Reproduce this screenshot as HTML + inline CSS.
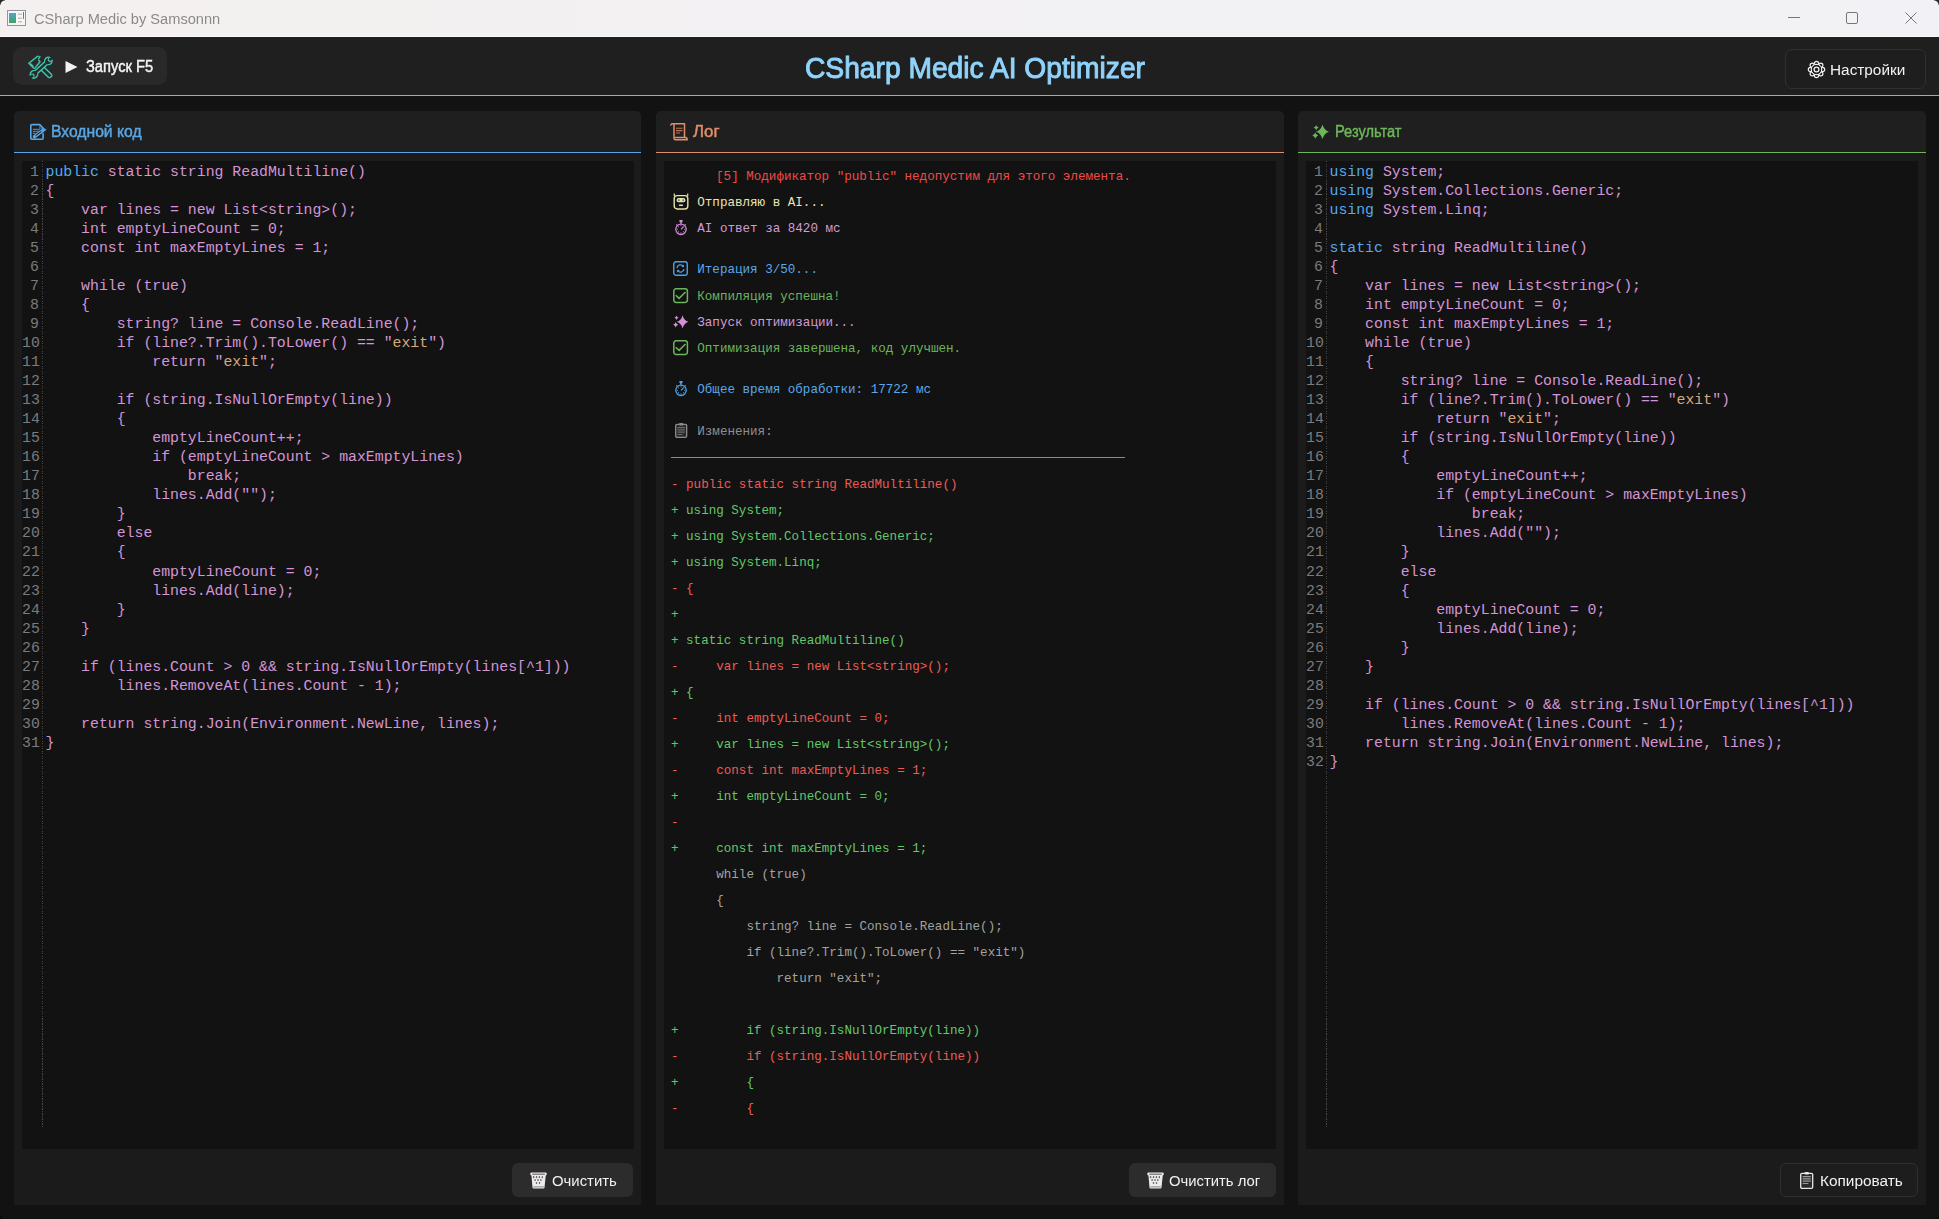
<!DOCTYPE html>
<html><head><meta charset="utf-8"><title>CSharp Medic</title>
<style>
*{margin:0;padding:0;box-sizing:border-box}
html,body{width:1939px;height:1219px;overflow:hidden;background:#121212}
body{position:relative;font-family:"Liberation Sans", sans-serif}
.a{position:absolute}
.t{position:absolute;white-space:pre;line-height:1}
pre{position:absolute;font-family:"Liberation Mono", monospace;white-space:pre;margin:0}
svg{position:absolute;overflow:visible}
.k{color:#56a9ec}.s{color:#d8a77c}
</style></head><body>

<div class="a" style="left:0;top:0;width:1939px;height:37px;background:linear-gradient(90deg,#f4f0ef,#f2f1f4 60%,#f2f1f5)"></div>
<div class="a" style="left:0;top:36px;width:1939px;height:1px;background:#fbfbfb"></div>
<div class="a" style="left:0;top:0;width:5px;height:5px;background:radial-gradient(circle at 100% 100%, transparent 4px, #2a2a2a 5px)"></div>
<div class="a" style="left:1934px;top:0;width:5px;height:5px;background:radial-gradient(circle at 0% 100%, transparent 4px, #2a2a2a 5px)"></div>
<svg style="left:7px;top:10px" width="19" height="16" viewBox="0 0 19 16">
<defs><linearGradient id="gA" x1="0" y1="0" x2="0" y2="1"><stop offset="0" stop-color="#5a9fd0"/><stop offset="1" stop-color="#38a860"/></linearGradient></defs>
<rect x="0.5" y="0.5" width="18" height="15" fill="#f6f6f6" stroke="#8f969c"/>
<rect x="2" y="3" width="7" height="10" fill="url(#gA)"/>
<rect x="11" y="3.5" width="4" height="1.5" fill="#c4c4c4"/><rect x="11" y="7.5" width="4" height="1.5" fill="#c4c4c4"/><rect x="11" y="11" width="4" height="1.5" fill="#c4c4c4"/>
<rect x="16" y="2" width="1" height="4" fill="#2f7fe0"/><rect x="16" y="6" width="1" height="3" fill="#2fb040"/>
</svg>
<div class="t" style="left:33.67px;top:11.00px;font-size:15.5px;font-family:'Liberation Sans', sans-serif;color:#8b8b8b;transform:scaleX(0.9441);transform-origin:0 0">CSharp Medic by Samsonnn</div>
<div class="a" style="left:1788px;top:17px;width:12px;height:1px;background:#767676"></div>
<div class="a" style="left:1846px;top:12px;width:12px;height:12px;border:1px solid #767676;border-radius:2px"></div>
<svg style="left:1905px;top:12px" width="12" height="12"><path d="M0.5 0.5L11.5 11.5M11.5 0.5L0.5 11.5" stroke="#767676" stroke-width="1"/></svg>
<div class="a" style="left:0;top:37px;width:1939px;height:58px;background:#1f1f1f"></div>
<div class="a" style="left:0;top:95px;width:1939px;height:1px;background:#c48eea"></div>
<div class="a" style="left:13px;top:47px;width:154px;height:38px;background:#292929;border-radius:9px"></div>
<svg style="left:65px;top:61px" width="13" height="12"><path d="M0.5 0 L12.5 6 L0.5 12 Z" fill="#f2f2f2"/></svg>
<div class="t" style="left:86.49px;top:59.00px;font-size:16px;font-family:'Liberation Sans', sans-serif;color:#f5f5f5;transform:scaleX(0.9177);transform-origin:0 0;-webkit-text-stroke:0.45px #f5f5f5">Запуск F5</div>
<div class="t" style="left:804.59px;top:53.00px;font-size:30px;font-family:'Liberation Sans', sans-serif;color:#8fd3fb;transform:scaleX(0.9397);transform-origin:0 0;-webkit-text-stroke:1px #8fd3fb">CSharp Medic AI Optimizer</div>
<div class="a" style="left:1785px;top:49px;width:141px;height:40px;border:1px solid #303030;border-radius:7px;background:#1e1e1e"></div>
<div class="t" style="left:1829.77px;top:62.00px;font-size:15.5px;font-family:'Liberation Sans', sans-serif;color:#f2f2f2;transform:scaleX(0.9905);transform-origin:0 0">Настройки</div>
<div class="a" style="left:14px;top:111px;width:627px;height:1094px;background:#1b1b1b;border-radius:5px 5px 0 0"></div>
<div class="a" style="left:14px;top:111px;width:627px;height:41px;background:#1f1f1f;border-radius:5px 5px 0 0"></div>
<div class="a" style="left:14px;top:152px;width:627px;height:1px;background:#5aa6e4"></div>
<div class="a" style="left:22px;top:161px;width:612px;height:988px;background:#121212"></div>
<div class="t" style="left:50.75px;top:124.00px;font-size:16px;font-family:'Liberation Sans', sans-serif;color:#5aa6e4;transform:scaleX(0.9802);transform-origin:0 0;-webkit-text-stroke:0.45px #5aa6e4">Входной код</div>
<div class="a" style="left:656px;top:111px;width:628px;height:1094px;background:#1b1b1b;border-radius:5px 5px 0 0"></div>
<div class="a" style="left:656px;top:111px;width:628px;height:41px;background:#1f1f1f;border-radius:5px 5px 0 0"></div>
<div class="a" style="left:656px;top:152px;width:628px;height:1px;background:#df8f6a"></div>
<div class="a" style="left:664px;top:161px;width:612px;height:988px;background:#121212"></div>
<div class="t" style="left:692.83px;top:124.00px;font-size:16px;font-family:'Liberation Sans', sans-serif;color:#df8f6a;transform:scaleX(1.0505);transform-origin:0 0;-webkit-text-stroke:0.45px #df8f6a">Лог</div>
<div class="a" style="left:1298px;top:111px;width:628px;height:1094px;background:#1b1b1b;border-radius:5px 5px 0 0"></div>
<div class="a" style="left:1298px;top:111px;width:628px;height:41px;background:#1f1f1f;border-radius:5px 5px 0 0"></div>
<div class="a" style="left:1298px;top:152px;width:628px;height:1px;background:#6db65a"></div>
<div class="a" style="left:1306px;top:161px;width:612px;height:988px;background:#121212"></div>
<div class="t" style="left:1334.83px;top:124.00px;font-size:16px;font-family:'Liberation Sans', sans-serif;color:#6db65a;transform:scaleX(0.9129);transform-origin:0 0;-webkit-text-stroke:0.45px #6db65a">Результат</div>
<pre style="left:22px;top:162.53px;width:17.00px;text-align:right;font-size:14.83px;line-height:19.04px;color:#7b7b7b">1
2
3
4
5
6
7
8
9
10
11
12
13
14
15
16
17
18
19
20
21
22
23
24
25
26
27
28
29
30
31</pre>
<div class="a" style="left:42.0px;top:161px;width:1px;height:967px;background:repeating-linear-gradient(180deg,#464646 0 1px,transparent 1px 2.5px)"></div>
<pre style="left:45.50px;top:162.53px;font-size:14.83px;line-height:19.04px;color:#d495d6"><span class="k">public</span> static string ReadMultiline()
{
    var lines = new List&lt;string&gt;();
    int emptyLineCount = 0;
    const int maxEmptyLines = 1;

    while (true)
    {
        string? line = Console.ReadLine();
        if (line?.Trim().ToLower() == "<span class="s">exit</span>")
            return "<span class="s">exit</span>";

        if (string.IsNullOrEmpty(line))
        {
            emptyLineCount++;
            if (emptyLineCount &gt; maxEmptyLines)
                break;
            lines.Add("");
        }
        else
        {
            emptyLineCount = 0;
            lines.Add(line);
        }
    }

    if (lines.Count &gt; 0 &amp;&amp; string.IsNullOrEmpty(lines[^1]))
        lines.RemoveAt(lines.Count - 1);

    return string.Join(Environment.NewLine, lines);
}</pre>
<pre style="left:1306px;top:162.53px;width:17.00px;text-align:right;font-size:14.83px;line-height:19.04px;color:#7b7b7b">1
2
3
4
5
6
7
8
9
10
11
12
13
14
15
16
17
18
19
20
21
22
23
24
25
26
27
28
29
30
31
32</pre>
<div class="a" style="left:1326.0px;top:161px;width:1px;height:967px;background:repeating-linear-gradient(180deg,#464646 0 1px,transparent 1px 2.5px)"></div>
<pre style="left:1329.50px;top:162.53px;font-size:14.83px;line-height:19.04px;color:#d495d6"><span class="k">using</span> System;
<span class="k">using</span> System.Collections.Generic;
<span class="k">using</span> System.Linq;

<span class="k">static</span> string ReadMultiline()
{
    var lines = new List&lt;string&gt;();
    int emptyLineCount = 0;
    const int maxEmptyLines = 1;
    while (true)
    {
        string? line = Console.ReadLine();
        if (line?.Trim().ToLower() == "<span class="s">exit</span>")
            return "<span class="s">exit</span>";
        if (string.IsNullOrEmpty(line))
        {
            emptyLineCount++;
            if (emptyLineCount &gt; maxEmptyLines)
                break;
            lines.Add("");
        }
        else
        {
            emptyLineCount = 0;
            lines.Add(line);
        }
    }

    if (lines.Count &gt; 0 &amp;&amp; string.IsNullOrEmpty(lines[^1]))
        lines.RemoveAt(lines.Count - 1);
    return string.Join(Environment.NewLine, lines);
}</pre>
<div class="t" style="left:716.09px;top:171.00px;font-size:12.57px;font-family:&quot;Liberation Mono&quot;,monospace;color:#f04a48">[5] Модификатор "public" недопустим для этого элемента.</div>
<div class="t" style="left:697.30px;top:197.00px;font-size:12.57px;font-family:&quot;Liberation Mono&quot;,monospace;color:#ece4b0">Отправляю в AI...</div>
<div class="t" style="left:697.30px;top:223.00px;font-size:12.57px;font-family:&quot;Liberation Mono&quot;,monospace;color:#d49bd6">AI ответ за 8420 мс</div>
<div class="t" style="left:697.30px;top:264.00px;font-size:12.57px;font-family:&quot;Liberation Mono&quot;,monospace;color:#5aa8ea">Итерация 3/50...</div>
<div class="t" style="left:697.30px;top:291.00px;font-size:12.57px;font-family:&quot;Liberation Mono&quot;,monospace;color:#6cb55c">Компиляция успешна!</div>
<div class="t" style="left:697.30px;top:317.00px;font-size:12.57px;font-family:&quot;Liberation Mono&quot;,monospace;color:#d49bd6">Запуск оптимизации...</div>
<div class="t" style="left:697.30px;top:343.00px;font-size:12.57px;font-family:&quot;Liberation Mono&quot;,monospace;color:#6cb55c">Оптимизация завершена, код улучшен.</div>
<div class="t" style="left:697.30px;top:384.00px;font-size:12.57px;font-family:&quot;Liberation Mono&quot;,monospace;color:#5aa8ea">Общее время обработки: 17722 мс</div>
<div class="t" style="left:697.30px;top:426.00px;font-size:12.57px;font-family:&quot;Liberation Mono&quot;,monospace;color:#8f8f8f">Изменения:</div>
<div class="a" style="left:671px;top:457px;width:454px;height:1px;background:#8a8a8a"></div>
<div class="t" style="left:671.00px;top:479.00px;font-size:12.57px;font-family:&quot;Liberation Mono&quot;,monospace;color:#ee5b55">- public static string ReadMultiline()</div>
<div class="t" style="left:671.00px;top:505.00px;font-size:12.57px;font-family:&quot;Liberation Mono&quot;,monospace;color:#62c86a">+ using System;</div>
<div class="t" style="left:671.00px;top:531.00px;font-size:12.57px;font-family:&quot;Liberation Mono&quot;,monospace;color:#62c86a">+ using System.Collections.Generic;</div>
<div class="t" style="left:671.00px;top:557.00px;font-size:12.57px;font-family:&quot;Liberation Mono&quot;,monospace;color:#62c86a">+ using System.Linq;</div>
<div class="t" style="left:671.00px;top:583.00px;font-size:12.57px;font-family:&quot;Liberation Mono&quot;,monospace;color:#ee5b55">- {</div>
<div class="t" style="left:671.00px;top:609.00px;font-size:12.57px;font-family:&quot;Liberation Mono&quot;,monospace;color:#62c86a">+ </div>
<div class="t" style="left:671.00px;top:635.00px;font-size:12.57px;font-family:&quot;Liberation Mono&quot;,monospace;color:#62c86a">+ static string ReadMultiline()</div>
<div class="t" style="left:671.00px;top:661.00px;font-size:12.57px;font-family:&quot;Liberation Mono&quot;,monospace;color:#ee5b55">-     var lines = new List&lt;string&gt;();</div>
<div class="t" style="left:671.00px;top:687.00px;font-size:12.57px;font-family:&quot;Liberation Mono&quot;,monospace;color:#62c86a">+ {</div>
<div class="t" style="left:671.00px;top:713.00px;font-size:12.57px;font-family:&quot;Liberation Mono&quot;,monospace;color:#ee5b55">-     int emptyLineCount = 0;</div>
<div class="t" style="left:671.00px;top:739.00px;font-size:12.57px;font-family:&quot;Liberation Mono&quot;,monospace;color:#62c86a">+     var lines = new List&lt;string&gt;();</div>
<div class="t" style="left:671.00px;top:765.00px;font-size:12.57px;font-family:&quot;Liberation Mono&quot;,monospace;color:#ee5b55">-     const int maxEmptyLines = 1;</div>
<div class="t" style="left:671.00px;top:791.00px;font-size:12.57px;font-family:&quot;Liberation Mono&quot;,monospace;color:#62c86a">+     int emptyLineCount = 0;</div>
<div class="t" style="left:671.00px;top:817.00px;font-size:12.57px;font-family:&quot;Liberation Mono&quot;,monospace;color:#ee5b55">- </div>
<div class="t" style="left:671.00px;top:843.00px;font-size:12.57px;font-family:&quot;Liberation Mono&quot;,monospace;color:#62c86a">+     const int maxEmptyLines = 1;</div>
<div class="t" style="left:671.00px;top:869.00px;font-size:12.57px;font-family:&quot;Liberation Mono&quot;,monospace;color:#a3a3a3">      while (true)</div>
<div class="t" style="left:671.00px;top:895.00px;font-size:12.57px;font-family:&quot;Liberation Mono&quot;,monospace;color:#a3a3a3">      {</div>
<div class="t" style="left:671.00px;top:921.00px;font-size:12.57px;font-family:&quot;Liberation Mono&quot;,monospace;color:#a3a3a3">          string? line = Console.ReadLine();</div>
<div class="t" style="left:671.00px;top:947.00px;font-size:12.57px;font-family:&quot;Liberation Mono&quot;,monospace;color:#a3a3a3">          if (line?.Trim().ToLower() == "exit")</div>
<div class="t" style="left:671.00px;top:973.00px;font-size:12.57px;font-family:&quot;Liberation Mono&quot;,monospace;color:#a3a3a3">              return "exit";</div>
<div class="t" style="left:671.00px;top:1025.00px;font-size:12.57px;font-family:&quot;Liberation Mono&quot;,monospace;color:#62c86a">+         if (string.IsNullOrEmpty(line))</div>
<div class="t" style="left:671.00px;top:1051.00px;font-size:12.57px;font-family:&quot;Liberation Mono&quot;,monospace;color:#ee5b55">-         if (string.IsNullOrEmpty(line))</div>
<div class="t" style="left:671.00px;top:1077.00px;font-size:12.57px;font-family:&quot;Liberation Mono&quot;,monospace;color:#62c86a">+         {</div>
<div class="t" style="left:671.00px;top:1103.00px;font-size:12.57px;font-family:&quot;Liberation Mono&quot;,monospace;color:#ee5b55">-         {</div>
<svg style="left:29px;top:123px" width="18" height="18" viewBox="0 0 18 18" ><g fill="none" stroke="#5aa6e4" stroke-width="1.6" stroke-linejoin="round" stroke-linecap="round">
<path d="M1.8 15.2 V2.6 Q1.8 1.6 2.8 1.6 H10.8 L14.2 5.4"/>
<path d="M14.1 10.6 V15.2 Q14.1 16.2 13.1 16.2 H2.8 Q1.8 16.2 1.8 15.2"/>
</g>
<path d="M10.8 1.8 V5.2 H14" fill="none" stroke="#3a7fc0" stroke-width="1.1"/>
<path d="M3.8 6.4 H11 M3.8 8.4 H10.4 M3.8 10.4 H6.6" stroke="#3f7db8" stroke-width="1.1"/>
<path d="M4.6 14.4 L15.6 6.2" stroke="#5aa6e4" stroke-width="3.4" stroke-linecap="butt"/>
<path d="M16.7 7.6 L13.8 4.6 L17.5 6.4 Z" fill="#5aa6e4"/>
<path d="M6.6 12.6 L12.3 8.4" stroke="#121212" stroke-width="1"/>
<path d="M3.6 15.4 L4.6 12.6 L6 14.4 Z" fill="#5aa6e4"/></svg>
<svg style="left:670px;top:123px" width="19" height="18" viewBox="0 0 19 18" ><g fill="none" stroke="#df8f6a" stroke-width="1.5" stroke-linejoin="round" stroke-linecap="round">
<path d="M0.8 2 Q1 0.8 2.5 0.8 L14.5 0.8 L14.5 14.5"/>
<path d="M4 1 L4 15.3 Q4 16.8 5.5 16.8 L17.2 16.8 Q17.5 15.2 16 14.5 L5.5 14.5"/>
</g>
<path d="M6 5.2 H12.5 M6 7.6 H12.5 M6 10 H10" stroke="#b87a5c" stroke-width="1.1"/></svg>
<svg style="left:1312px;top:124px" width="18" height="16" viewBox="0 0 18 16" ><path fill="#6db65a" d="M10.5 0.5 Q11.93 6.194 17.0 7.8 Q11.93 9.405999999999999 10.5 15.1 Q9.07 9.405999999999999 4.0 7.8 Q9.07 6.194 10.5 0.5 Z M4.2 1.0 Q4.772 3.028 6.800000000000001 3.6 Q4.772 4.172000000000001 4.2 6.2 Q3.628 4.172000000000001 1.6 3.6 Q3.628 3.028 4.2 1.0 Z M3.3 8.3 Q3.9379999999999997 10.796 6.199999999999999 11.5 Q3.9379999999999997 12.204 3.3 14.7 Q2.662 12.204 0.3999999999999999 11.5 Q2.662 10.796 3.3 8.3 Z"/></svg>
<svg style="left:26px;top:54px" width="28" height="26" viewBox="0 0 28 26" ><defs><filter id="er" x="-20%" y="-20%" width="140%" height="140%"><feMorphology in="SourceAlpha" operator="erode" radius="1.45"/><feFlood flood-color="#292929"/><feComposite in2="SourceAlpha" operator="in"/></filter>
<filter id="er2" x="-20%" y="-20%" width="140%" height="140%"><feMorphology in="SourceAlpha" operator="erode" radius="1.45" result="e"/><feFlood flood-color="#292929"/><feComposite in2="e" operator="in"/></filter></defs>
<g id="hm"><path d="M2.1 9.3 L11.2 2.0 L14.4 2.4 L12.8 5.4 L14.6 7.8 L9.0 14.8 L7.0 14.2 Z" fill="#3ccbb0" stroke="#3ccbb0" stroke-width="0.6" stroke-linejoin="round"/>
<path d="M16.2 14.2 L23.6 21.4" stroke="#3ccbb0" stroke-width="5.6" stroke-linecap="round"/></g>
<g filter="url(#er2)"><path d="M2.1 9.3 L11.2 2.0 L14.4 2.4 L12.8 5.4 L14.6 7.8 L9.0 14.8 L7.0 14.2 Z" fill="#000" stroke="#000" stroke-width="0.6" stroke-linejoin="round"/>
<path d="M16.2 14.2 L23.6 21.4" stroke="#000" stroke-width="5.6" stroke-linecap="round"/></g>
<path d="M4.3 9.5 L7.4 12.5" stroke="#3ccbb0" stroke-width="1.3"/>
<g><path d="M26.48 5.24 A4.4 4.4 0 1 1 24.74 3.17 L22.45 5.09 L24.19 7.16 Z M3.82 22.06 A4.4 4.4 0 1 1 5.56 24.13 L7.85 22.21 L6.11 20.14 Z" fill="#3ccbb0"/><path d="M9.6 18.6 L20.6 8.6" stroke="#3ccbb0" stroke-width="5.2"/></g>
<g filter="url(#er2)"><path d="M26.48 5.24 A4.4 4.4 0 1 1 24.74 3.17 L22.45 5.09 L24.19 7.16 Z M3.82 22.06 A4.4 4.4 0 1 1 5.56 24.13 L7.85 22.21 L6.11 20.14 Z" fill="#000"/><path d="M9.6 18.6 L20.6 8.6" stroke="#000" stroke-width="5.2"/></g></svg>
<svg style="left:1808px;top:61px" width="17" height="17" viewBox="0 0 17 17" ><g fill="#1e1e1e" stroke="#f0f0f0" stroke-width="1.2"><circle cx="8.50" cy="2.40" r="2.1"/><circle cx="12.81" cy="4.19" r="2.1"/><circle cx="14.60" cy="8.50" r="2.1"/><circle cx="12.81" cy="12.81" r="2.1"/><circle cx="8.50" cy="14.60" r="2.1"/><circle cx="4.19" cy="12.81" r="2.1"/><circle cx="2.40" cy="8.50" r="2.1"/><circle cx="4.19" cy="4.19" r="2.1"/><circle cx="8.5" cy="8.5" r="5.2"/></g>
<circle cx="8.5" cy="8.5" r="4.6" fill="#1e1e1e"/><circle cx="8.5" cy="8.5" r="2.4" fill="none" stroke="#f0f0f0" stroke-width="1.3"/></svg>
<svg style="left:673px;top:193px" width="16" height="17" viewBox="0 0 16 17" ><g fill="none" stroke="#e9e3a8" stroke-width="1.4" stroke-linejoin="round">
<rect x="1.2" y="2.6" width="13.6" height="13.4" rx="3"/>
</g>
<path d="M1.3 0.5 V3 M14.7 0.5 V3" stroke="#e9e3a8" stroke-width="1.2"/>
<rect x="3.6" y="5" width="8.8" height="4.2" rx="2" fill="#e9e3a8"/>
<circle cx="5.9" cy="7.1" r="0.9" fill="#1a6a70"/><circle cx="10.1" cy="7.1" r="0.9" fill="#1a6a70"/>
<rect x="5.8" y="11.4" width="4.4" height="1.6" rx="0.8" fill="#e9e3a8"/></svg>
<svg style="left:674.7px;top:220px" width="12" height="15" viewBox="0 0 12 15" ><rect x="4.4" y="0" width="3.2" height="2" rx="0.6" fill="#d48ad8"/><rect x="5.2" y="1.5" width="1.6" height="2.2" fill="#d48ad8"/>
<circle cx="6" cy="9.3" r="5.2" fill="none" stroke="#d48ad8" stroke-width="1.3"/>
<path d="M1.3 4.4 L2.6 5.6 M10.7 4.4 L9.4 5.6" stroke="#d48ad8" stroke-width="1.2"/>
<circle cx="9.60" cy="9.30" r="0.55" fill="#d48ad8"/><circle cx="8.55" cy="11.85" r="0.55" fill="#d48ad8"/><circle cx="6.00" cy="12.90" r="0.55" fill="#d48ad8"/><circle cx="3.45" cy="11.85" r="0.55" fill="#d48ad8"/><circle cx="2.40" cy="9.30" r="0.55" fill="#d48ad8"/><circle cx="3.45" cy="6.75" r="0.55" fill="#d48ad8"/><circle cx="6.00" cy="5.70" r="0.55" fill="#d48ad8"/><circle cx="8.55" cy="6.75" r="0.55" fill="#d48ad8"/><path d="M6 9.3 L8.3 7" stroke="#d48ad8" stroke-width="1.1"/></svg>
<svg style="left:674.7px;top:380.5px" width="12" height="15" viewBox="0 0 12 15" ><rect x="4.4" y="0" width="3.2" height="2" rx="0.6" fill="#4fa3ec"/><rect x="5.2" y="1.5" width="1.6" height="2.2" fill="#4fa3ec"/>
<circle cx="6" cy="9.3" r="5.2" fill="none" stroke="#4fa3ec" stroke-width="1.3"/>
<path d="M1.3 4.4 L2.6 5.6 M10.7 4.4 L9.4 5.6" stroke="#4fa3ec" stroke-width="1.2"/>
<circle cx="9.60" cy="9.30" r="0.55" fill="#4fa3ec"/><circle cx="8.55" cy="11.85" r="0.55" fill="#4fa3ec"/><circle cx="6.00" cy="12.90" r="0.55" fill="#4fa3ec"/><circle cx="3.45" cy="11.85" r="0.55" fill="#4fa3ec"/><circle cx="2.40" cy="9.30" r="0.55" fill="#4fa3ec"/><circle cx="3.45" cy="6.75" r="0.55" fill="#4fa3ec"/><circle cx="6.00" cy="5.70" r="0.55" fill="#4fa3ec"/><circle cx="8.55" cy="6.75" r="0.55" fill="#4fa3ec"/><path d="M6 9.3 L8.3 7" stroke="#4fa3ec" stroke-width="1.1"/></svg>
<svg style="left:673px;top:261px" width="15" height="15" viewBox="0 0 15 15" ><rect x="0.75" y="0.75" width="13.5" height="13.5" rx="2.2" fill="none" stroke="#4f9fe8" stroke-width="1.4"/>
<g fill="none" stroke="#4f9fe8" stroke-width="1.3"><path d="M4 7 A3.5 3.5 0 0 1 10.3 5.3"/><path d="M11 8 A3.5 3.5 0 0 1 4.7 9.7"/></g>
<path d="M10.8 3.5 L11 6.3 L8.3 6" fill="#4f9fe8"/><path d="M4.2 11.5 L4 8.7 L6.7 9" fill="#4f9fe8"/></svg>
<svg style="left:673px;top:287.6px" width="15" height="15" viewBox="0 0 15 15" ><rect x="0.8" y="0.8" width="13.6" height="13.6" rx="2.3" fill="none" stroke="#6cb55c" stroke-width="1.5"/>
<path d="M2.7 7.2 L6.1 10.4 L12.5 4" fill="none" stroke="#6cb55c" stroke-width="1.5"/></svg>
<svg style="left:673px;top:339.6px" width="15" height="15" viewBox="0 0 15 15" ><rect x="0.8" y="0.8" width="13.6" height="13.6" rx="2.3" fill="none" stroke="#6cb55c" stroke-width="1.5"/>
<path d="M2.7 7.2 L6.1 10.4 L12.5 4" fill="none" stroke="#6cb55c" stroke-width="1.5"/></svg>
<svg style="left:673px;top:314.5px" width="16" height="14" viewBox="0 0 16 14" ><path fill="#d68fd6" d="M9.6 0.20000000000000018 Q10.876 5.348 15.399999999999999 6.8 Q10.876 8.251999999999999 9.6 13.399999999999999 Q8.324 8.251999999999999 3.8 6.8 Q8.324 5.348 9.6 0.20000000000000018 Z M3.5 0.5999999999999996 Q3.984 2.316 5.7 2.8 Q3.984 3.284 3.5 5.0 Q3.016 3.284 1.2999999999999998 2.8 Q3.016 2.316 3.5 0.5999999999999996 Z M2.7 7.000000000000001 Q3.2720000000000002 9.184000000000001 5.300000000000001 9.8 Q3.2720000000000002 10.416 2.7 12.600000000000001 Q2.128 10.416 0.10000000000000009 9.8 Q2.128 9.184000000000001 2.7 7.000000000000001 Z"/></svg>
<svg style="left:674.5px;top:423px" width="12.4" height="15" viewBox="0 0 12.4 15" ><rect x="0.7" y="1.3" width="11.0" height="13" rx="1.2" fill="#2a2a2a" stroke="#8c8c8c" stroke-width="1.3"/>
<rect x="4.0" y="0" width="4.4" height="2.4" rx="1" fill="#8c8c8c"/>
<path d="M2.6 4.6 H9.8 M2.6 6.9 H9.8 M2.6 9.2 H9.8 M2.6 11.5 H7.4" stroke="#6a6a6a" stroke-width="1.2"/></svg>
<div class="a" style="left:512px;top:1163px;width:121px;height:34px;background:#2c2c2c;border-radius:6px"></div>
<svg style="left:530px;top:1172px" width="17" height="17" viewBox="0 0 17 17" ><path d="M1.4 3 L2.5 15.6 Q2.6 16.5 3.5 16.5 L13.5 16.5 Q14.4 16.5 14.5 15.6 L15.8 3 Z" fill="#ececec"/>
<ellipse cx="3.6" cy="5.2" rx="0.75" ry="1.1" fill="#6a5a6a"/><ellipse cx="6.5" cy="5.2" rx="0.75" ry="1.1" fill="#6a5a6a"/><ellipse cx="9.4" cy="5.2" rx="0.75" ry="1.1" fill="#6a5a6a"/><ellipse cx="12.3" cy="5.2" rx="0.75" ry="1.1" fill="#6a5a6a"/><ellipse cx="5.1" cy="8.1" rx="0.75" ry="1.1" fill="#6a5a6a"/><ellipse cx="8" cy="8.1" rx="0.75" ry="1.1" fill="#6a5a6a"/><ellipse cx="10.9" cy="8.1" rx="0.75" ry="1.1" fill="#6a5a6a"/><ellipse cx="6.5" cy="11" rx="0.75" ry="1.1" fill="#6a5a6a"/><ellipse cx="9.5" cy="11" rx="0.75" ry="1.1" fill="#6a5a6a"/><rect x="3.2" y="14.1" width="10.6" height="1.5" fill="#a8a8a8"/>
<rect x="0.2" y="0.6" width="16.6" height="2.8" rx="1.4" fill="#ececec"/>
<rect x="2" y="1.7" width="13" height="0.9" rx="0.45" fill="#222"/></svg>
<div class="t" style="left:552.33px;top:1173.00px;font-size:15.5px;font-family:'Liberation Sans', sans-serif;color:#f2f2f2;transform:scaleX(0.9606);transform-origin:0 0">Очистить</div>
<div class="a" style="left:1129px;top:1163px;width:147px;height:34px;background:#2c2c2c;border-radius:6px"></div>
<svg style="left:1147px;top:1172px" width="17" height="17" viewBox="0 0 17 17" ><path d="M1.4 3 L2.5 15.6 Q2.6 16.5 3.5 16.5 L13.5 16.5 Q14.4 16.5 14.5 15.6 L15.8 3 Z" fill="#ececec"/>
<ellipse cx="3.6" cy="5.2" rx="0.75" ry="1.1" fill="#6a5a6a"/><ellipse cx="6.5" cy="5.2" rx="0.75" ry="1.1" fill="#6a5a6a"/><ellipse cx="9.4" cy="5.2" rx="0.75" ry="1.1" fill="#6a5a6a"/><ellipse cx="12.3" cy="5.2" rx="0.75" ry="1.1" fill="#6a5a6a"/><ellipse cx="5.1" cy="8.1" rx="0.75" ry="1.1" fill="#6a5a6a"/><ellipse cx="8" cy="8.1" rx="0.75" ry="1.1" fill="#6a5a6a"/><ellipse cx="10.9" cy="8.1" rx="0.75" ry="1.1" fill="#6a5a6a"/><ellipse cx="6.5" cy="11" rx="0.75" ry="1.1" fill="#6a5a6a"/><ellipse cx="9.5" cy="11" rx="0.75" ry="1.1" fill="#6a5a6a"/><rect x="3.2" y="14.1" width="10.6" height="1.5" fill="#a8a8a8"/>
<rect x="0.2" y="0.6" width="16.6" height="2.8" rx="1.4" fill="#ececec"/>
<rect x="2" y="1.7" width="13" height="0.9" rx="0.45" fill="#222"/></svg>
<div class="t" style="left:1169.33px;top:1173.00px;font-size:15.5px;font-family:'Liberation Sans', sans-serif;color:#f2f2f2;transform:scaleX(0.9566);transform-origin:0 0">Очистить лог</div>
<div class="a" style="left:1780px;top:1163px;width:138px;height:34px;border:1px solid #2f2f2f;background:#1d1d1d;border-radius:6px"></div>
<svg style="left:1800px;top:1172px" width="13.4" height="17" viewBox="0 0 13.4 17" ><rect x="0.7" y="1.3" width="12.0" height="15" rx="1.2" fill="#2a2a2a" stroke="#e8e8e8" stroke-width="1.3"/>
<rect x="4.5" y="0" width="4.4" height="2.4" rx="1" fill="#e8e8e8"/>
<path d="M2.6 4.6 H10.8 M2.6 6.9 H10.8 M2.6 9.2 H10.8 M2.6 11.5 H8.4" stroke="#9a9a9a" stroke-width="1.2"/></svg>
<div class="t" style="left:1819.77px;top:1173.00px;font-size:15.5px;font-family:'Liberation Sans', sans-serif;color:#f2f2f2;transform:scaleX(0.9926);transform-origin:0 0">Копировать</div>
<div class="a" style="left:0;top:1214px;width:5px;height:5px;background:radial-gradient(circle at 100% 0%, transparent 4px, #0a0a0a 5px)"></div>
<div class="a" style="left:1934px;top:1214px;width:5px;height:5px;background:radial-gradient(circle at 0% 0%, transparent 4px, #0a0a0a 5px)"></div>
</body></html>
